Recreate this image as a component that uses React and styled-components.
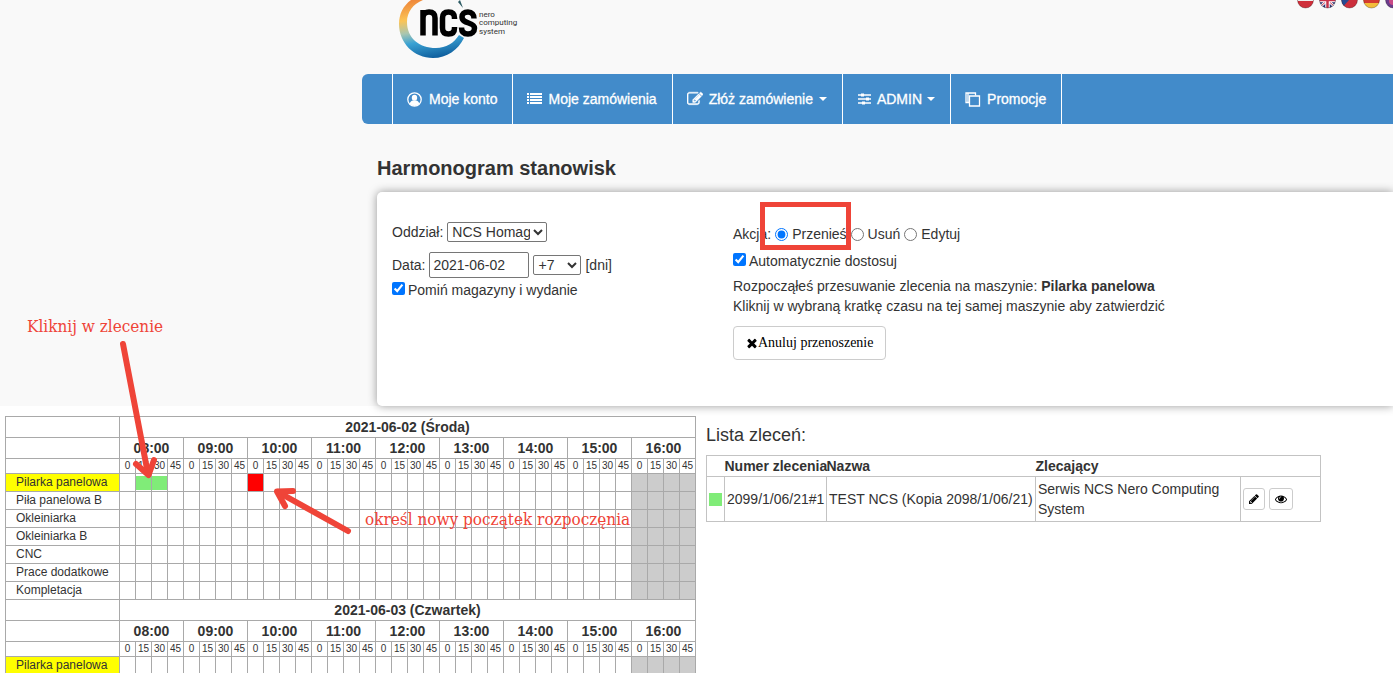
import { Fragment, useState } from "react";
import styled, { createGlobalStyle } from "styled-components";

const HOURS = ["08:00", "09:00", "10:00", "11:00", "12:00", "13:00", "14:00", "15:00", "16:00"];
const QUARTERS = [0, 15, 30, 45];
const MACHINES = [
  "Pilarka panelowa",
  "Piła panelowa B",
  "Okleiniarka",
  "Okleiniarka B",
  "CNC",
  "Prace dodatkowe",
  "Kompletacja",
];
const CLOSED_FROM = 32;

const DAYS = [
  { title: "2021-06-02 (Środa)", machines: MACHINES, order: [1, 2], target: 8 },
  { title: "2021-06-03 (Czwartek)", machines: MACHINES.slice(0, 1), order: [], target: -1 },
];

const ICONS = {
  edit: "M888 1184l116-116-152-152-116 116v56h96v96h56zm440-720q-16-16-33 1l-350 350q-17 17-1 33t33-1l350-350q17-17 1-33zm80 594v190q0 119-84.5 203.5t-203.5 84.5h-832q-119 0-203.5-84.5t-84.5-203.5v-832q0-119 84.5-203.5t203.5-84.5h832q63 0 117 25 15 7 18 23 3 17-9 29l-49 49q-14 14-32 8-23-6-45-6h-832q-66 0-113 47t-47 113v832q0 66 47 113t113 47h832q66 0 113-47t47-113v-126q0-13 9-22l64-64q15-15 35-7t20 29zm-96-738l288 288-672 672h-288v-288zm444 132l-92 92-288-288 92-92q28-28 68-28t68 28l152 152q28 28 28 68t-28 68z",
  pencil: "M491 1536l91-91-235-235-91 91v107h128v128h107zm523-928q0-22-22-22-10 0-17 7l-542 542q-7 7-7 17 0 22 22 22 10 0 17-7l542-542q7-7 7-17zm-54-192l416 416-832 832h-416v-416zm683 96q0 53-37 90l-166 166-416-416 166-165q36-38 90-38 53 0 91 38l235 234q37 39 37 91z",
  eye: "M1664 960q-152-236-381-353 61 104 61 225 0 185-131.5 316.5t-316.5 131.5-316.5-131.5-131.5-316.5q0-121 61-225-229 117-381 353 133 205 333.5 326.5t434.5 121.5 434.5-121.5 333.5-326.5zm-720-384q0-20-14-34t-34-14q-125 0-214.5 89.5t-89.5 214.5q0 20 14 34t34 14 34-14 14-34q0-86 61-147t147-61q20 0 34-14t14-34zm848 384q0 34-20 69-140 230-376.5 368.5t-499.5 138.5-499.5-139-376.5-368q-20-35-20-69t20-69q140-229 376.5-368t499.5-139 499.5 139 376.5 368q20 35 20 69z",
  times: "M1490 1322q0 40-28 68l-136 136q-28 28-68 28t-68-28l-294-294-294 294q-28 28-68 28t-68-28l-136-136q-28-28-28-68t28-68l294-294-294-294q-28-28-28-68t28-68l136-136q28-28 68-28t68 28l294 294 294-294q28-28 68-28t68 28l136 136q28 28 28 68t-28 68l-294 294 294 294q28 28 28 68z",
};

function Icon({ name, size, width = size, box = "0 0 1792 1792", bold }) {
  return (
    <svg width={width} height={size} viewBox={box} fill="currentColor" aria-hidden="true">
      <path d={ICONS[name]} stroke={bold ? "currentColor" : "none"} strokeWidth="50" />
    </svg>
  );
}

function UserIcon() {
  return (
    <svg width="16" height="15" viewBox="0 0 16 15" aria-hidden="true">
      <circle cx="7.5" cy="7.5" r="6.7" fill="none" stroke="currentColor" strokeWidth="1.3" />
      <ellipse cx="7.5" cy="5.8" rx="2.7" ry="3" fill="currentColor" />
      <path d="M2.6 11.6C3.4 9.6 4.8 8.8 5.8 8.6h3.4c1 .2 2.4 1 3.2 3A6.4 6.4 0 0 1 7.5 14a6.4 6.4 0 0 1-4.9-2.4z" fill="currentColor" />
    </svg>
  );
}

function ListIcon() {
  return (
    <svg width="15" height="12" viewBox="0 0 15 12" fill="currentColor" aria-hidden="true">
      {[0, 3, 6, 9].map((y) => (
        <path key={y} d={`M0 ${y}h2v2H0zM3 ${y}h12v2H3z`} />
      ))}
    </svg>
  );
}

function SlidersIcon() {
  return (
    <svg width="15" height="12" viewBox="0 0 15 12" aria-hidden="true">
      <path d="M1 2h13M1 6h13M1 10h13" stroke="currentColor" strokeWidth="1.5" />
      <path d="M4 .5h3v3H4zM9 4.500h3v3H9zM5 8.500h3v3H5z" fill="currentColor" />
    </svg>
  );
}

function CopyIcon() {
  return (
    <svg width="16" height="15" viewBox="0 0 16 15" fill="none" stroke="currentColor" strokeWidth="1.3" aria-hidden="true">
      <path d="M4 10.500H1V1h9.500v2.500M3 1v9" />
      <path d="M4.500 4h10v10h-10z" />
    </svg>
  );
}

function Logo() {
  return (
    <svg width="122" height="59" viewBox="0 0 122 59" role="img" aria-label="ncs nero computing system">
      <defs>
        <linearGradient id="ring" x1="0.3" y1="0" x2="0.5" y2="1">
          <stop offset="0" stopColor="#ef8a3c" />
          <stop offset="0.3" stopColor="#fbc456" />
          <stop offset="0.52" stopColor="#a9c6b0" />
          <stop offset="0.7" stopColor="#3ba3d4" />
          <stop offset="1" stopColor="#10609f" />
        </linearGradient>
      </defs>
      <path d="M12 0C4 6 0 14 0 24c0 19 15 34 34 34 14 0 25-8 31-20l-5-3c-5 8-13 13-23 13C20 48 8 38 8 22 8 12 14 4 24 0z" fill="url(#ring)" />
      <path d="M61 0l3 8-5-6z" fill="#2b5a63" />
      <g fill="none" stroke="#000" strokeWidth="5.500">
        <path d="M24 35.500V10M24 18c0-4 3-6 6-6 4 0 6 2 6 6v17.500" />
        <path d="M55.500 19v-1c0-4-2-6-6-6s-6 2-6 6v10c0 4 2 6 6 6s6-2 6-6v-1" />
        <path d="M75 18.500c0-4-2-6.500-6-6.500s-6 2-6 5c0 7 12.500 5 12.500 11 0 4-2.500 6-6.500 6s-6.500-2-6.500-6.500" />
      </g>
      <LogoText x="80" y="17">nero</LogoText>
      <LogoText x="80" y="25">computing</LogoText>
      <LogoText x="80" y="34">system</LogoText>
    </svg>
  );
}

function Flag({ children, id }) {
  return (
    <svg width="17" height="9" viewBox="0 0 17 9" aria-hidden="true">
      <clipPath id={id}>
        <circle cx="8.500" cy="0" r="8" />
      </clipPath>
      <g clipPath={`url(#${id})`}>{children}</g>
      <circle cx="8.500" cy="0" r="8" fill="none" stroke="#00000044" />
    </svg>
  );
}

function Flags() {
  return (
    <FlagList>
      <Flag id="pl">
        <rect width="17" height="9" fill="#cf2f3a" />
        <rect width="17" height="1" fill="#eee" />
      </Flag>
      <Flag id="gb">
        <rect width="17" height="9" fill="#2d3272" />
        <path d="M8.500 0L0 8M8.500 0L17 8" stroke="#fff" strokeWidth="2.500" />
        <path d="M8.500 0L0 8M8.500 0L17 8" stroke="#c8324a" />
        <path d="M8.500 0v9M0 0h17" stroke="#fff" strokeWidth="4.500" />
        <path d="M8.500 0v9M0 0h17" stroke="#c8324a" strokeWidth="2.500" />
      </Flag>
      <Flag id="cz">
        <rect width="17" height="9" fill="#cc2f3c" />
        <path d="M0 9V0h8z" fill="#264a92" />
      </Flag>
      <Flag id="de">
        <rect width="17" height="9" fill="#f3bd3a" />
        <rect width="17" height="3" fill="#d53a30" />
      </Flag>
      <Flag id="other">
        <rect width="17" height="9" fill="#6a3c8c" />
        <circle cx="8" cy="1" r="4" fill="#c94a86" />
      </Flag>
    </FlagList>
  );
}

function Schedule() {
  return (
    <ScheduleTable>
      <colgroup>
        <NameCol />
        {HOURS.map((h) => QUARTERS.map((q) => <col key={h + q} />))}
      </colgroup>
      <tbody>
        {DAYS.map((day) => (
          <Fragment key={day.title}>
            <tr>
              <HourCell as="td" />
              <HourCell colSpan={36}>{day.title}</HourCell>
            </tr>
            <tr>
              <HourCell as="td" />
              {HOURS.map((h) => (
                <HourCell key={h} colSpan={4}>{h}</HourCell>
              ))}
            </tr>
            <tr>
              <MinuteCell />
              {HOURS.map((h) => QUARTERS.map((q) => <MinuteCell key={h + q}>{q}</MinuteCell>))}
            </tr>
            {day.machines.map((name, row) => (
              <tr key={name}>
                <MachineCell $active={row === 0}>{name}</MachineCell>
                {Array.from({ length: 36 }, (_, i) => (
                  <SlotCell key={i} $closed={i >= CLOSED_FROM} $target={row === 0 && i === day.target}>
                    {row === 0 && day.order.includes(i) && <Order />}
                  </SlotCell>
                ))}
              </tr>
            ))}
          </Fragment>
        ))}
      </tbody>
    </ScheduleTable>
  );
}

function Orders() {
  return (
    <OrdersPanel>
      <OrdersTitle>Lista zleceń:</OrdersTitle>
      <OrdersTable>
        <colgroup>
          <OrderCol $w={18} />
          <OrderCol $w={102} />
          <OrderCol $w={209} />
          <OrderCol $w={205} />
          <OrderCol $w={80} />
        </colgroup>
        <thead>
          <tr>
            <th></th>
            <th>Numer zlecenia</th>
            <th>Nazwa</th>
            <th>Zlecający</th>
            <th></th>
          </tr>
        </thead>
        <tbody>
          <tr>
            <td><Swatch /></td>
            <td>2099/1/06/21#1</td>
            <td>TEST NCS (Kopia 2098/1/06/21)</td>
            <td>Serwis NCS Nero Computing System</td>
            <td>
              <Actions>
                <SmallButton aria-label="Edytuj">
                  <Icon name="pencil" size={12} width={10} box="128 0 1536 1792" />
                </SmallButton>
                <SmallButton aria-label="Podgląd"><Icon name="eye" size={12} /></SmallButton>
              </Actions>
            </td>
          </tr>
        </tbody>
      </OrdersTable>
    </OrdersPanel>
  );
}

function Annotations() {
  return (
    <>
      <Arrows width="860" height="560" viewBox="0 0 860 560" fill="none" stroke="#ef4438" aria-hidden="true">
        <rect x="762.500" y="204.500" width="86" height="43" strokeWidth="5" />
        <g strokeWidth="6" strokeLinecap="round" strokeLinejoin="round">
          <path d="M123 344L148 474" />
          <path d="M136 464L148.500 475L154 460" />
          <path d="M348 531L278 492" />
          <path d="M293 491L277 491.500L285 506" />
        </g>
      </Arrows>
      <Note $x={27} $y={315}>Kliknij w zlecenie</Note>
      <Note $x={365} $y={508}>określ nowy początek rozpoczęnia</Note>
    </>
  );
}

export default function App() {
  const [action, setAction] = useState("move");
  const [date, setDate] = useState("2021-06-02");
  const [skip, setSkip] = useState(true);
  const [adjust, setAdjust] = useState(true);

  return (
    <Page>
      <GlobalStyle />
      <Top>
        <Header>
          <Logo />
          <Flags />
        </Header>
        <Nav>
          <NavItem href="#konto"><UserIcon />Moje konto</NavItem>
          <NavItem href="#zamowienia"><ListIcon />Moje zamówienia</NavItem>
          <NavItem href="#zloz"><Icon name="edit" size={16} bold />Złóż zamówienie<Caret /></NavItem>
          <NavItem href="#admin" $tight><SlidersIcon />ADMIN<Caret /></NavItem>
          <NavItem href="#promocje" $last><CopyIcon />Promocje</NavItem>
        </Nav>
        <Title>Harmonogram stanowisk</Title>
        <Card>
          <Filters>
            <Line>
              <label htmlFor="branch">Oddział:</label>
              <Select id="branch" $w={100}>
                <option>NCS Homag</option>
              </Select>
            </Line>
            <Line>
              <label htmlFor="date">Data:</label>
              <DateInput id="date" value={date} onChange={(e) => setDate(e.target.value)} />
              <Select aria-label="Liczba dni" $w={48}>
                <option>+7</option>
              </Select>
              [dni]
            </Line>
            <CheckLine>
              <Check type="checkbox" id="skip" checked={skip} onChange={() => setSkip(!skip)} />
              <label htmlFor="skip">Pomiń magazyny i wydanie</label>
            </CheckLine>
          </Filters>
          <div>
            <ActionLine>
              Akcja:
              <Check type="radio" name="action" id="move" checked={action === "move"} onChange={() => setAction("move")} />
              <label htmlFor="move">Przenieś</label>
              <Check type="radio" name="action" id="remove" checked={action === "remove"} onChange={() => setAction("remove")} />
              <label htmlFor="remove">Usuń</label>
              <Check type="radio" name="action" id="edit" checked={action === "edit"} onChange={() => setAction("edit")} />
              <label htmlFor="edit">Edytuj</label>
            </ActionLine>
            <CheckLine>
              <Check type="checkbox" id="adjust" checked={adjust} onChange={() => setAdjust(!adjust)} />
              <label htmlFor="adjust">Automatycznie dostosuj</label>
            </CheckLine>
            <Info>
              Rozpocząłeś przesuwanie zlecenia na maszynie: <b>Pilarka panelowa</b>
              <br />
              Kliknij w wybraną kratkę czasu na tej samej maszynie aby zatwierdzić
            </Info>
            <CancelButton><Icon name="times" size={14} width={12} box="128 0 1536 1792" />Anuluj przenoszenie</CancelButton>
          </div>
        </Card>
      </Top>
      <Bottom>
        <Schedule />
        <Orders />
      </Bottom>
      <Annotations />
    </Page>
  );
}

const GlobalStyle = createGlobalStyle`
  * { box-sizing: border-box; }
  body {
    margin: 0;
    background: #fff;
    color: #333;
    font: 14px/20px "Liberation Sans", Arial, sans-serif;
  }
`;

const Page = styled.div`
  position: relative;
  min-height: 100vh;
  overflow: hidden;
`;

const Top = styled.div`
  background: #f9f9f9;
  padding-left: 362px;
`;

const Header = styled.header`
  display: flex;
  justify-content: space-between;
  height: 74px;
  padding-left: 37px;
`;

const LogoText = styled.text`
  font: 8px Roboto, sans-serif;
  fill: #333;
`;

const FlagList = styled.div`
  display: flex;
  gap: 5px;
  margin-right: -9px;
`;

const Nav = styled.nav`
  display: flex;
  height: 50px;
  padding-left: 30px;
  background: #428bca;
  border-radius: 6px 0 0 6px;
`;

const NavItem = styled.a`
  display: flex;
  align-items: center;
  gap: ${(p) => (p.$tight ? "5px" : "6px")};
  padding: 0 15px 0 14px;
  border-left: 1px solid #fff;
  border-right: ${(p) => (p.$last ? "1px solid #fff" : "0")};
  color: #fff;
  text-decoration: none;
  white-space: nowrap;
  -webkit-text-stroke: 0.3px #fff;
`;

const Caret = styled.span`
  border: 4px solid transparent;
  border-top-color: #fff;
  border-bottom: 0;
`;

const Title = styled.h1`
  margin: 0;
  padding: 32px 0 12px 15px;
  font-size: 20px;
  line-height: 24px;
`;

const Card = styled.section`
  display: grid;
  grid-template-columns: 341px 1fr;
  min-height: 214px;
  margin-left: 15px;
  padding: 30px 15px 45px;
  background: #fff;
  border-radius: 5px 0 0 5px;
  box-shadow: 0 0 10px rgba(0, 0, 0, 0.4);
`;

const Filters = styled.div`
  display: flex;
  flex-direction: column;
`;

const Line = styled.div`
  display: flex;
  align-items: center;
  gap: 4px;
  margin-bottom: 10px;

  & + & {
    margin-bottom: 2px;
  }
`;

const ActionLine = styled(Line)`
  height: 24px;
  margin-bottom: 5px;
`;

const CheckLine = styled.div`
  display: flex;
  align-items: flex-start;
  gap: 3px;

  input {
    margin-top: 2px;
  }
`;

const Select = styled.select`
  width: ${(p) => p.$w}px;
  height: 20px;
  padding: 0;
  border: 1px solid #767676;
  border-radius: 2px;
  background: #fff;
  color: #333;
  font: inherit;
`;

const DateInput = styled.input`
  width: 100px;
  height: 26px;
  padding: 0 3px;
  border: 1px solid #767676;
  border-radius: 2px;
  color: #333;
  font: inherit;
`;

const Check = styled.input`
  width: 13px;
  height: 13px;
  margin: 0;
`;

const Info = styled.p`
  margin: 5px 0 10px;
`;

const CancelButton = styled.button`
  display: flex;
  align-items: center;
  height: 34px;
  padding: 0 12px;
  border: 1px solid #ccc;
  border-radius: 4px;
  background: #fff;
  color: #000;
  font: 14px "Liberation Serif", serif;
`;

const Bottom = styled.main`
  display: flex;
  align-items: flex-start;
  gap: 10px;
  padding: 10px 5px 0;
`;

const ScheduleTable = styled.table`
  width: 691px;
  flex: none;
  table-layout: fixed;
  border-collapse: collapse;

  th,
  td {
    padding: 0;
    border: 1px solid #a9a9a9;
  }
`;

const NameCol = styled.col`
  width: 114px;
`;

const HourCell = styled.th`
  height: 21px;
  line-height: 20px;
`;

const MinuteCell = styled.td`
  height: 15px;
  font-size: 10px;
  line-height: 14px;
  text-align: center;
`;

const MachineCell = styled.th`
  && {
    height: 18px;
    padding-left: 10px;
  }
  background: ${(p) => (p.$active ? "#ff0" : "#fff")};
  font-size: 12px;
  font-weight: normal;
  line-height: 17px;
  text-align: left;
  white-space: nowrap;
`;

const SlotCell = styled.td`
  background: ${(p) => (p.$target ? "#f00" : p.$closed ? "#ccc" : "transparent")};
`;

const Order = styled.div`
  height: 14px;
  background: #80ec78;
`;

const OrdersPanel = styled.section`
  padding-top: 9px;
`;

const OrdersTitle = styled.h2`
  margin: 0 0 9px;
  font-size: 18px;
  font-weight: normal;
  line-height: 21px;
`;

const OrdersTable = styled.table`
  width: 615px;
  table-layout: fixed;
  border-collapse: collapse;
  border: 1px solid #c3c3c3;

  th {
    height: 21px;
    padding: 0;
    text-align: left;
    white-space: nowrap;
  }
  td {
    height: 45px;
    padding: 2px;
    border: 1px solid #c3c3c3;
  }
`;

const OrderCol = styled.col`
  width: ${(p) => p.$w}px;
`;

const Swatch = styled.div`
  height: 13px;
  background: #80ec78;
`;

const Actions = styled.div`
  display: flex;
  gap: 4px;
`;

const SmallButton = styled.button`
  display: flex;
  align-items: center;
  height: 22px;
  padding: 0 5px;
  border: 1px solid #ccc;
  border-radius: 3px;
  background: #fff;
  color: #000;
`;

const Arrows = styled.svg`
  position: absolute;
  top: 0;
  left: 0;
  pointer-events: none;
`;

const Note = styled.span`
  position: absolute;
  left: ${(p) => p.$x}px;
  top: ${(p) => p.$y}px;
  color: #ef4438;
  font: 17px/22px "DejaVu Serif Condensed", "Liberation Serif", serif;
  white-space: nowrap;
`;
